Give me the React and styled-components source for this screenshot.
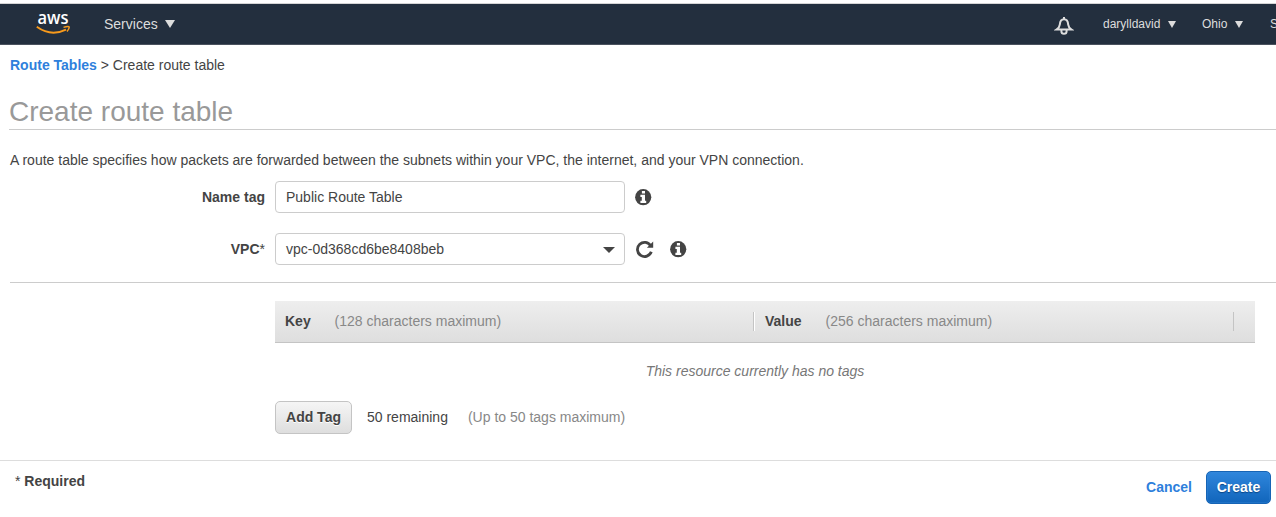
import React from 'react';
import styled, { createGlobalStyle } from 'styled-components';

const Global = createGlobalStyle`
  * { box-sizing: border-box; }
  body { margin: 0; background: #fff; color: #444; font: 14px/20px "Liberation Sans", Arial, sans-serif; overflow: hidden; }
`;
const Page = styled.div`height: 517px; overflow: hidden; display: flex; flex-direction: column;`;
const NavBar = styled.nav`
  height: 42px; flex: none; margin-top: 3px; display: flex; align-items: center; overflow: hidden;
  background: #232f3e; border-top: 1px solid #d5d5d5; border-bottom: 1px solid #4a525e; color: #ddd; white-space: nowrap;
`;
const Logo = styled.svg`width: 36px; height: 26px; margin-left: 35px; flex: none; overflow: visible;`;
const Bell = styled.svg`width: 20px; height: 20px; margin: 3px 29px 0 auto; flex: none;`;
const NavItem = styled.a`
  display: flex; align-items: center; flex: none; gap: ${p => p.$gap}px; margin-left: ${p => p.$left}px;
  width: ${p => p.$width}px; font-size: ${p => p.$size}px;
`;
const Triangle = styled.span`
  width: 0; height: 0; border: solid transparent; border-width: ${p => p.$h}px ${p => p.$w}px 0; border-top-color: #ddd;
`;
const Crumbs = styled.div`padding: 10px 10px 0; height: 40px;`;
const Link = styled.a`color: #2e7fdc; font-weight: bold;`;
const Title = styled.h1`
  margin: 0 0 0 9px; height: 45px; padding-top: 11px; font-size: 28px; line-height: 32px; font-weight: normal;
  color: #999; border-bottom: 1px solid #ccc;
`;
const Intro = styled.p`margin: 20px 10px 11px; height: 20px;`;
const Row = styled.div`display: flex; align-items: center; height: 32px; margin-bottom: ${p => p.$after}px;`;
const Label = styled.label`width: 265px; margin-right: 10px; text-align: right; font-weight: bold;`;
const Star = styled.span`font-weight: normal;`;
const Field = styled.div`
  width: 350px; height: 32px; padding: 0 9px 0 10px; margin-right: 10px; border: 1px solid #ccc; border-radius: 4px;
  display: flex; align-items: center; justify-content: space-between;
`;
const Caret = styled.span`margin-top: 2px; border: solid transparent; border-width: 6px 6px 0; border-top-color: #444;`;
const Icon = styled.svg`width: ${p => p.$size}px; height: ${p => p.$size}px; margin-right: ${p => p.$after || 0}px; fill: #444;`;
const Tags = styled.section`margin-left: 10px; padding: 18px 21px 0 265px; height: 178px; border-top: 1px solid #ccc;`;
const TableHead = styled.div`
  display: flex; align-items: center; height: 42px; padding-left: 10px; border-bottom: 1px solid #c4c4c4;
  background: linear-gradient(#eee, #dedede);
`;
const Column = styled.div`
  width: ${p => p.$width}px; height: 19px; line-height: 19px; margin-right: ${p => p.$after}px; border-right: 1px solid #c4c4c4;
  box-shadow: ${p => (p.$lit ? '1px 0 #fff' : 'none')};
`;
const Heading = styled.b`display: inline-block; width: ${p => p.$width}px;`;
const Muted = styled.span`color: #888;`;
const Empty = styled.div`height: 58px; padding-top: 18px; text-align: center; font-style: italic; color: #777; padding-right: 20px;`;
const AddRow = styled.div`display: flex; align-items: flex-start; line-height: 32px;`;
const Button = styled.button`
  height: 33px; width: ${p => (p.$primary ? 65 : 77)}px; padding: 0 0 2px; border-radius: 5px;
  border: 1px solid ${p => (p.$primary ? '#1664b5' : '#c4c4c4')};
  background: ${p => (p.$primary ? 'linear-gradient(#2f86dc, #1165bb)' : 'linear-gradient(#f5f5f5, #dedede)')};
  color: ${p => (p.$primary ? '#fff' : '#444')}; font: bold 14px "Liberation Sans", Arial, sans-serif;
  text-shadow: ${p => (p.$primary ? '0 1px 1px #0a4687' : '0 1px #fff')};
  box-shadow: ${p => (p.$primary ? 'inset 0 0 0 1px #3a8ada55' : 'none')};
`;
const Remaining = styled.span`margin: 0 20px 0 15px;`;
const Footer = styled.footer`
  flex: 1; border-top: 1px solid #ddd; padding: 10px 5px 0 15px; display: flex; align-items: flex-start;
`;
const Required = styled.div`flex: 1; font-weight: bold;`;
const Actions = styled.div`display: flex; align-items: flex-start; gap: 14px; line-height: 32px;`;

const InfoIcon = () => (
  <Icon $size={17} viewBox="0 0 17 17">
    <circle cx="8.2" cy="8.2" r="8.1" />
    <path fill="#fff" d="M6.900 2h3.100v2.500H6.900zM5.400 5.800h4.600v6h1.200V14H5.400v-2.200h1.400V8H5.400z" />
  </Icon>
);
const RefreshIcon = () => (
  <Icon $size={20} $after={15} viewBox="0 0 20 20">
    <path d="M15.800 7A7.100 7.100 0 1 0 16.300 12.700" fill="none" stroke="#444" strokeWidth="2.800" />
    <path d="M18.200 2.500v6.300h-6.300z" />
  </Icon>
);

export default function App() {
  return (
    <Page>
      <Global />
      <NavBar>
        <Logo viewBox="0 0 36 26">
          <text x="2.500" y="12.800" fontFamily="Open Sans, sans-serif" fontWeight="600" fontSize="18.500" textLength="31" lengthAdjust="spacingAndGlyphs" fill="#fff">aws</text>
          <path d="M1.800 15.800Q16 26 31 18.600" fill="none" stroke="#f79a1c" strokeWidth="1.900" />
          <path d="M28.500 16.400Q34 14.800 34.200 16.200Q34.200 18 32 20.500" fill="none" stroke="#f79a1c" strokeWidth="1.500" />
        </Logo>
        <NavItem $left={33} $size={14} $gap={7}>Services <Triangle $w={5.5} $h={8.5} /></NavItem>
        <Bell viewBox="0 0 20 20" fill="none" stroke="#ddd" strokeWidth="2">
          <path d="M10 1v2M2.500 13.600h15q-3-2-3.300-5Q13.800 3.300 10 3.300T5.800 8.600Q5.500 11.600 2.500 13.600zM7.400 14v1.200a2.600 2.600 0 0 0 5.200 0v-1.200" />
        </Bell>
        <NavItem $left={0} $size={12} $gap={8} $width={99}>darylldavid <Triangle $w={4.5} $h={7.5} /></NavItem>
        <NavItem $left={0} $size={12} $gap={8} $width={68}>Ohio <Triangle $w={4.5} $h={7.5} /></NavItem>
        <NavItem $left={0} $size={12} $gap={0} $width={6}>Support</NavItem>
      </NavBar>
      <Crumbs><Link>Route Tables</Link> &gt; Create route table</Crumbs>
      <Title>Create route table</Title>
      <Intro>A route table specifies how packets are forwarded between the subnets within your VPC, the internet, and your VPN connection.</Intro>
      <Row $after={20}><Label>Name tag</Label><Field>Public Route Table</Field><InfoIcon /></Row>
      <Row $after={17}><Label>VPC<Star>*</Star></Label><Field>vpc-0d368cd6be8408beb<Caret /></Field><RefreshIcon /><InfoIcon /></Row>
      <Tags>
        <TableHead>
          <Column $width={469} $after={11} $lit><Heading $width={49.6}>Key</Heading><Muted>(128 characters maximum)</Muted></Column>
          <Column $width={469} $after={0}><Heading $width={60.6}>Value</Heading><Muted>(256 characters maximum)</Muted></Column>
        </TableHead>
        <Empty>This resource currently has no tags</Empty>
        <AddRow><Button>Add Tag</Button><Remaining>50 remaining</Remaining><Muted>(Up to 50 tags maximum)</Muted></AddRow>
      </Tags>
      <Footer>
        <Required><Star>*</Star> Required</Required>
        <Actions><Link>Cancel</Link><Button $primary>Create</Button></Actions>
      </Footer>
    </Page>
  );
}
